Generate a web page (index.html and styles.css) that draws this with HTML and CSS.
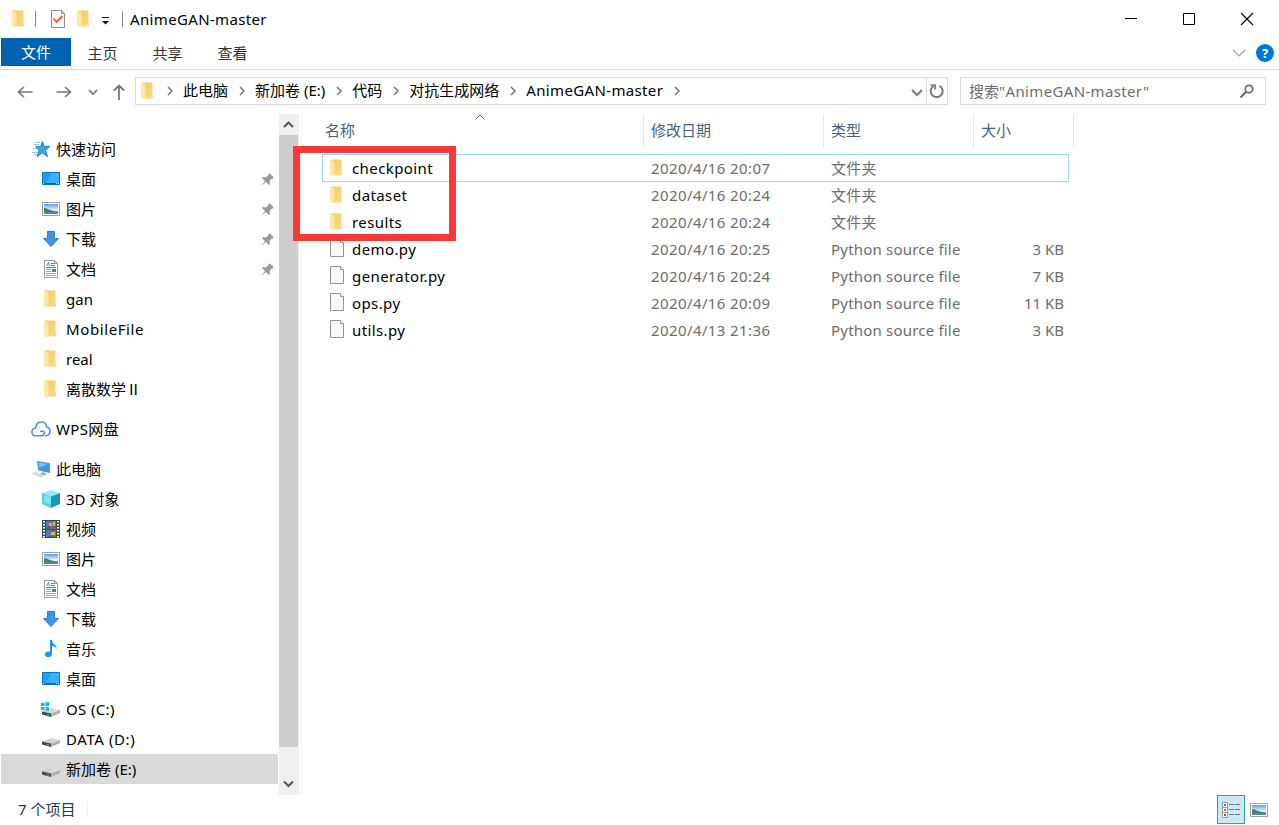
FILE: index.html
```
<!DOCTYPE html>
<html lang="zh-CN">
<head>
	<meta charset="UTF-8">
	<title>AnimeGAN-master</title>
	<link rel="stylesheet" href="styles.css">
</head>
<body>
	<!-- 图标 -->
	<svg class="defs" width="0" height="0">
		<defs>
			<linearGradient id="gold" x1="0" x2="1" y1="0" y2="1"><stop offset="0" stop-color="#f0cb68"/><stop offset="1" stop-color="#fbdc86"/></linearGradient>
			<linearGradient id="sky" x1="0" x2="0" y1="0" y2="1"><stop offset="0" stop-color="#5a9cf0"/><stop offset=".6" stop-color="#e8f4fb"/><stop offset="1" stop-color="#9cc4dc"/></linearGradient>
			<linearGradient id="disk" x1="0" x2="1" y1="0" y2="0"><stop offset="0" stop-color="#c4c4c6"/><stop offset="1" stop-color="#e4e4e6"/></linearGradient>
		</defs>
		<symbol id="folder" viewBox="0 0 20 20">
			<path d="M4 1.500h10.500V13l.5 1v3.500H4z" fill="url(#gold)"/>
			<path d="M3 1.500h1L7.500 4v12.500L6 18.500l-3-2z" fill="#ffe8a4"/>
		</symbol>
		<symbol id="desktop" viewBox="0 0 20 20">
			<path d="M1.500 3.500h17v12h-17z" fill="#18a0fb" stroke="#0873b8"/>
			<path d="M11 4h7v10H5z" fill="#3bb0ff"/>
			<path d="M2 14.500h16" stroke="#0569a8"/>
			<path d="M2 14.500h1M15 14.500h1M17 14.500h1" stroke="#fff"/>
		</symbol>
		<symbol id="picture" viewBox="0 0 20 20">
			<path d="M1.500 3.500h17v13h-17z" fill="#fff" stroke="#a0a0a0"/>
			<path d="M3 5h14v10H3z" fill="url(#sky)"/>
			<path d="M3 9c3 0 5 2 9 3l5 .5V14H3z" fill="#497f68"/>
			<path d="M3 13.500c5-1 9 .5 14-1V15H3z" fill="#5387ab"/>
		</symbol>
		<symbol id="download" viewBox="0 0 20 20">
			<path d="M6.500 2.500h7v7h4L10 17.500l-7.500-8h4z" fill="#3c96e6" stroke="#2a7fcd"/>
		</symbol>
		<symbol id="doc" viewBox="0 0 20 20">
			<path d="M3.500 1.500h10l3 3v14h-13z" fill="#fff" stroke="#999"/>
			<path d="M13.500 1.500v3h3" fill="none" stroke="#999"/>
			<path d="M5.500 7l2-3.500L8.500 7M10 4.500h3M10 6.500h4M5 8.500h10" fill="none" stroke="#2b8fd0"/>
			<path d="M5 10.500h5M5 12.500h5M5 14.500h10M5 16.500h10" stroke="#a3a3a3"/>
			<path d="M11 10h4v3h-4z" fill="#4285b5"/>
		</symbol>
		<symbol id="star" viewBox="0 0 20 20">
			<path d="M11.500 2.500l1.600 5 6-.2-4.600 4 2 6.200-5.300-3.700-5.200 3.700 2-6.300-3.300-3.500 5 .1z" fill="#35a7ee" stroke="#2185c9"/>
			<path d="M4 3.500h5M2.500 5.500h5M2 9.500h4M1 13.500h5M3.500 15.500h2" stroke="#8cc9ed"/>
		</symbol>
		<symbol id="cloud" viewBox="0 0 20 20">
			<path d="M11.500 16.800H5A3.900 3.900 0 0 1 4.600 9C5.200 1.200 15 1.400 15.600 7.800A4.600 4.600 0 0 1 15 16.800M9.800 12.500C12 11 14.500 13.500 13 15.300 12.500 16.300 11.900 16.800 11 16.800" fill="none" stroke="#4d8df0" stroke-width="1.600" stroke-linecap="round"/>
		</symbol>
		<symbol id="pc" viewBox="0 0 20 20">
			<path d="M6.500 2.500l12 2v9L7.500 11z" fill="#329fdf" stroke="#6e8796" stroke-width=".8"/>
			<path d="M7.500 3.500l9 1.500-8 3.500z" fill="#79caf5"/>
			<path d="M11 13l3 .5 2 2-3 1-4-1.500z" fill="#a4afb7"/>
			<path d="M0 14.500l4-1.500 10 4-4 1.500z" fill="#d3d8dc"/>
		</symbol>
		<symbol id="cube" viewBox="0 0 20 20">
			<path d="M1 4l9-3 9 3-9 4z" fill="#a0e9f3"/>
			<path d="M1 4l9 3.500V19l-9-4z" fill="#4fd0e3"/>
			<path d="M19 4l-9 3.500V19l9-4z" fill="#1499b6"/>
			<path d="M3 6l7 2.500v7L3 13z" fill="#82e0ed"/>
		</symbol>
		<symbol id="video" viewBox="0 0 20 20">
			<path d="M1 1h18v18H1z" fill="#444"/>
			<path d="M5 2h10v8H5zM5 11h10v7H5z" fill="#477bd2"/>
			<path d="M3 2v17M17 2v17" stroke="#fff" stroke-width="2" stroke-dasharray="1.500 1.500"/>
			<path d="M8 4h3v3H8zM12 3h2v4h-2zM10 13h4v3h-4z" fill="#eab52c"/>
			<path d="M10 9h3v3h-3zM6 7h4v2H6z" fill="#c53826"/>
			<path d="M5 9h4v1H5zM12 7h3v2h-3zM7 17h7v1H7z" fill="#397d3d"/>
		</symbol>
		<symbol id="music" viewBox="0 0 20 20">
			<path d="M9 1h2c0 4 5 4 4.500 9-.8-2-2-3-4.500-3v7.500c0 5-7 4.500-7 1 0-2.500 3-3.500 5-2.500z" fill="#0f99f2"/>
		</symbol>
		<symbol id="drive" viewBox="0 0 20 20">
			<path d="M1 12.500L10.500 9 19 11l-9 3.500z" fill="url(#disk)"/>
			<path d="M1 12.500l9 2V18l-9-2.500z" fill="#484848"/>
			<path d="M10 14.500l9-3.500v3l-9 4z" fill="#b0b0b2"/>
			<path d="M6 15.500l2 .6" stroke="#35d444" stroke-width="1.500"/>
		</symbol>
		<symbol id="osdrive" viewBox="0 0 20 20">
			<use href="#drive"/>
			<path d="M0 3h9v8.500H0z" fill="#fff"/>
			<path d="M0 4l3.500-.5V7H0zM4.500 3.300L8 3v4H4.500zM0 8h3.500v3.300L0 11zM4.500 8H8v4l-3.500-.5z" fill="#0bb9ef"/>
		</symbol>
		<symbol id="file" viewBox="0 0 20 20">
			<path d="M3.500 .5h10l3 3v14h-13z" fill="#f8f8f8" stroke="#949494"/>
			<path d="M13.500 .5v3h3" fill="#fff" stroke="#949494"/>
		</symbol>
		<symbol id="pin" viewBox="0 0 14 14">
			<path d="M8.500 1l1.500-.5L13.500 4l-.5 1.500-1.500.2L9.500 8l.5 3-1 1-3-3-5 4 4-5-3-3 1-1 3 .5 2.400-2.400z" fill="#929ca5"/>
		</symbol>
		<symbol id="chev" viewBox="0 0 10 10">
			<path d="M3 1l4 4-4 4" fill="none" stroke="#777" stroke-width="1.500"/>
		</symbol>
	</svg>

	<div class="titlebar">
		<svg class="icon"><use href="#folder"/></svg>
		<i class="bar"></i>
		<svg class="check" width="16" height="20" viewBox="0 0 16 20">
			<path d="M1.500 1.500h10l3 3v14h-13z" fill="#fafafa" stroke="#8b8b8b"/>
			<path d="M11.500 1.500v3h3" fill="none" stroke="#8b8b8b"/>
			<path d="M3.500 9.500l3 3.500L12.500 7" fill="none" stroke="#f0591e" stroke-width="1.800"/>
		</svg>
		<svg class="icon"><use href="#folder"/></svg>
		<svg class="quick" width="8" height="8" viewBox="0 0 8 8"><path d="M0 .5h7" stroke="#111"/><path d="M0 4h7L3.500 7.500z" fill="#111"/></svg>
		<i class="bar last"></i>
		<span class="en">AnimeGAN-master</span>
		<div class="winbtns">
			<svg width="14" height="14" viewBox="0 0 14 14"><path d="M1 6.500h12" stroke="#000"/></svg>
			<svg width="14" height="14" viewBox="0 0 14 14"><path d="M1.500 1.500h11v11h-11z" fill="none" stroke="#000"/></svg>
			<svg width="14" height="14" viewBox="0 0 14 14"><path d="M1 1l12 12M13 1L1 13" stroke="#000" stroke-width="1.100"/></svg>
		</div>
	</div>

	<div class="tabs">
		<div class="tab active">文件</div>
		<div class="tab">主页</div>
		<div class="tab">共享</div>
		<div class="tab">查看</div>
		<svg class="expand" width="14" height="8" viewBox="0 0 14 8"><path d="M1 1l6 6 6-6" fill="none" stroke="#a0a0a0" stroke-width="1.200"/></svg>
		<div class="help">?</div>
	</div>

	<div class="navbar">
		<div class="arrows">
			<svg width="16" height="14" viewBox="0 0 16 14"><path d="M15.500 7H1.500M7 2L1.500 7 7 12" fill="none" stroke="#777" stroke-width="1.600"/></svg>
			<svg width="16" height="14" viewBox="0 0 16 14"><path d="M.5 7h14M9 2l5.500 5L9 12" fill="none" stroke="#777" stroke-width="1.600"/></svg>
			<svg width="10" height="6" viewBox="0 0 10 6"><path d="M1 1l4 4 4-4" fill="none" stroke="#777" stroke-width="1.700"/></svg>
			<svg width="12" height="16" viewBox="0 0 12 16"><path d="M6 16V1.500M1 6.500l5-5 5 5" fill="none" stroke="#777" stroke-width="1.800"/></svg>
		</div>
		<div class="address">
			<svg class="icon"><use href="#folder"/></svg>
			<svg class="chev"><use href="#chev"/></svg>
			<span>此电脑</span>
			<svg class="chev"><use href="#chev"/></svg>
			<span>新加卷 (E:)</span>
			<svg class="chev"><use href="#chev"/></svg>
			<span>代码</span>
			<svg class="chev"><use href="#chev"/></svg>
			<span>对抗生成网络</span>
			<svg class="chev"><use href="#chev"/></svg>
			<span class="en">AnimeGAN-master</span>
			<svg class="chev"><use href="#chev"/></svg>
			<svg class="drop" width="12" height="8" viewBox="0 0 12 8"><path d="M1 1l5 5 5-5" fill="none" stroke="#777" stroke-width="2"/></svg>
			<div class="refresh">
				<svg width="16" height="16" viewBox="0 0 16 16"><path d="M10.500 2.800A6 6 0 1 1 4.500 3" fill="none" stroke="#777" stroke-width="2"/><path d="M1.500 2H6v4.500" fill="none" stroke="#777" stroke-width="1.700"/></svg>
			</div>
		</div>
		<div class="search">
			<span>搜索<b class="en">"AnimeGAN-master"</b></span>
			<svg width="14" height="14" viewBox="0 0 14 14"><circle cx="9" cy="5" r="3.700" fill="none" stroke="#666" stroke-width="1.700"/><path d="M6 8l-5.500 5.500" stroke="#666" stroke-width="2"/></svg>
		</div>
	</div>

	<div class="main">
		<div class="side">
			<div class="group">
				<div class="item root"><svg class="icon"><use href="#star"/></svg>快速访问</div>
				<div class="item"><svg class="icon"><use href="#desktop"/></svg>桌面<svg class="pin"><use href="#pin"/></svg></div>
				<div class="item"><svg class="icon"><use href="#picture"/></svg>图片<svg class="pin"><use href="#pin"/></svg></div>
				<div class="item"><svg class="icon"><use href="#download"/></svg>下载<svg class="pin"><use href="#pin"/></svg></div>
				<div class="item"><svg class="icon"><use href="#doc"/></svg>文档<svg class="pin"><use href="#pin"/></svg></div>
				<div class="item"><svg class="icon"><use href="#folder"/></svg>gan</div>
				<div class="item"><svg class="icon"><use href="#folder"/></svg><span class="wide">MobileFile</span></div>
				<div class="item"><svg class="icon"><use href="#folder"/></svg>real</div>
				<div class="item"><svg class="icon"><use href="#folder"/></svg><span class="cn">离散数学Ⅱ</span></div>
			</div>
			<div class="group">
				<div class="item root"><svg class="icon"><use href="#cloud"/></svg><span class="en">WPS网盘</span></div>
			</div>
			<div class="group">
				<div class="item root"><svg class="icon"><use href="#pc"/></svg>此电脑</div>
				<div class="item"><svg class="icon"><use href="#cube"/></svg><span>3D 对象</span></div>
				<div class="item"><svg class="icon"><use href="#video"/></svg>视频</div>
				<div class="item"><svg class="icon"><use href="#picture"/></svg>图片</div>
				<div class="item"><svg class="icon"><use href="#doc"/></svg>文档</div>
				<div class="item"><svg class="icon"><use href="#download"/></svg>下载</div>
				<div class="item"><svg class="icon"><use href="#music"/></svg>音乐</div>
				<div class="item"><svg class="icon"><use href="#desktop"/></svg>桌面</div>
				<div class="item"><svg class="icon"><use href="#osdrive"/></svg><span class="en">OS (C:)</span></div>
				<div class="item"><svg class="icon"><use href="#drive"/></svg><span class="wide">DATA (D:)</span></div>
				<div class="item on"><svg class="icon"><use href="#drive"/></svg>新加卷 (E:)</div>
			</div>
		</div>
		<div class="scroll">
			<svg width="12" height="8" viewBox="0 0 12 8"><path d="M1 7l4.500-4.500L10 7" fill="none" stroke="#555" stroke-width="2"/></svg>
			<div class="thumb"></div>
			<svg width="12" height="8" viewBox="0 0 12 8"><path d="M1 1.500L5.500 6 10 1.500" fill="none" stroke="#555" stroke-width="2"/></svg>
		</div>
		<div class="list">
			<div class="head">
				<div class="col name">名称<svg class="sort" width="10" height="6" viewBox="0 0 10 6"><path d="M.5 5.500L5 1l4.500 4.500" fill="none" stroke="#666"/></svg></div>
				<div class="col date">修改日期</div>
				<div class="col type">类型</div>
				<div class="col size">大小</div>
			</div>
			<div class="rows">
				<div class="row focus"><svg class="icon"><use href="#folder"/></svg><div class="fname">checkpoint</div><div class="fdate">2020/4/16 20:07</div><div class="ftype">文件夹</div><div class="fsize"></div></div>
				<div class="row"><svg class="icon"><use href="#folder"/></svg><div class="fname">dataset</div><div class="fdate">2020/4/16 20:24</div><div class="ftype">文件夹</div><div class="fsize"></div></div>
				<div class="row"><svg class="icon"><use href="#folder"/></svg><div class="fname">results</div><div class="fdate">2020/4/16 20:24</div><div class="ftype">文件夹</div><div class="fsize"></div></div>
				<div class="row"><svg class="icon"><use href="#file"/></svg><div class="fname">demo.py</div><div class="fdate">2020/4/16 20:25</div><div class="ftype">Python source file</div><div class="fsize">3 KB</div></div>
				<div class="row"><svg class="icon"><use href="#file"/></svg><div class="fname">generator.py</div><div class="fdate">2020/4/16 20:24</div><div class="ftype">Python source file</div><div class="fsize">7 KB</div></div>
				<div class="row"><svg class="icon"><use href="#file"/></svg><div class="fname">ops.py</div><div class="fdate">2020/4/16 20:09</div><div class="ftype">Python source file</div><div class="fsize">11 KB</div></div>
				<div class="row"><svg class="icon"><use href="#file"/></svg><div class="fname">utils.py</div><div class="fdate">2020/4/13 21:36</div><div class="ftype">Python source file</div><div class="fsize">3 KB</div></div>
			</div>
			<!-- 红框标注 -->
			<div class="mark"></div>
		</div>
	</div>

	<div class="status">
		<span>7 个项目</span>
		<div class="views">
			<div class="view active">
				<svg width="20" height="18" viewBox="0 0 20 18">
					<path d="M1.500 1.500h5v5h-5zM1.500 6.500h5v5h-5zM1.500 11.500h5v5h-5z" fill="#fff" stroke="#999"/>
					<path d="M3 3h2v2H3z" fill="#3c7ec0"/><path d="M3 8h2v2H3z" fill="#6d9235"/><path d="M3 13h2v2H3z" fill="#c9302c"/>
					<path d="M8 3.500h5M14 3.500h5M8 8.500h5M14 8.500h5M8 13.500h5M14 13.500h5" stroke="#777"/>
				</svg>
			</div>
			<div class="view"><svg class="icon"><use href="#picture"/></svg></div>
		</div>
	</div>
</body>
</html>
```
FILE: styles.css
```
*{
	padding: 0;
	margin: 0;
	box-sizing: border-box;
}
body{
	width: 1279px;
	height: 825px;
	overflow: hidden;
	background-color: #fff;
	color: #000;
	font-family: "Noto Sans", "Noto Sans CJK SC", sans-serif;
	font-size: 15px;
	line-height: 20px;
	cursor: default;
	display: flex;
	flex-direction: column;
}
b{
	font-weight: normal;
}
svg{
	display: block;
	flex: none;
}
.defs{
	position: absolute;
}
.icon{
	width: 20px;
	height: 20px;
}
.en{
	letter-spacing: 0.35px;
}
.wide{
	letter-spacing: 0.6px;
}
.cn{
	font-family: "Noto Sans CJK SC", sans-serif;
}

/* 标题栏 */
.titlebar{
	height: 38px;
	display: flex;
	align-items: center;
	padding-left: 9px;
}
.bar{
	width: 1px;
	height: 16px;
	background-color: #888;
	margin: 0 14px 0 6px;
}
.check{
	margin-right: 8px;
}
.quick{
	margin: 4px 0 0 8px;
}
.bar.last{
	margin: 0 7px 0 12px;
}
.winbtns{
	margin-left: auto;
	display: flex;
	gap: 44px;
	padding-right: 25px;
}

/* 选项卡 */
.tabs{
	height: 32px;
	display: flex;
	border-bottom: 1px #dadbdc solid;
	padding-left: 1px;
}
.tab{
	width: 65px;
	height: 28px;
	line-height: 31px;
	padding-right: 2px;
	text-align: center;
	color: #333;
}
.tab.active{
	width: 70px;
	line-height: 29px;
	padding: 0;
	background-color: #0063b1;
	color: #fff;
}
.expand{
	margin: 11px 10px 0 auto;
}
.help{
	width: 18px;
	height: 18px;
	margin: 6px 5px 0 0;
	border-radius: 50%;
	background-color: #0078d7;
	color: #fff;
	font-size: 13px;
	font-weight: bold;
	line-height: 18px;
	text-align: center;
}

/* 地址栏 */
.navbar{
	height: 44px;
	display: flex;
	padding: 7px 13px 9px 0;
}
.arrows{
	width: 135px;
	display: flex;
	align-items: center;
	padding: 2px 0 0 17px;
}
.arrows svg:nth-child(2){
	margin-left: 23px;
}
.arrows svg:nth-child(3){
	margin-left: 16px;
}
.arrows svg:nth-child(4){
	margin-left: 15px;
}
.address{
	width: 813px;
	height: 28px;
	border: 1px #d9d9d9 solid;
	display: flex;
	align-items: center;
	padding-left: 2px;
	white-space: nowrap;
}
.address>.icon{
	margin-right: 5px;
}
.address span{
	margin-top: -2px;
}
.chev{
	width: 10px;
	height: 10px;
	margin: 0 8px 0 9px;
}
.address>.icon+.chev{
	margin-left: 2px;
}
.drop{
	margin: 3px 3px 0 auto;
}
.refresh{
	width: 21px;
	height: 26px;
	border-left: 1px #d9d9d9 solid;
	display: flex;
	align-items: center;
	justify-content: center;
}
.search{
	width: 306px;
	height: 28px;
	margin-left: 12px;
	border: 1px #d9d9d9 solid;
	color: #6d6d6d;
	display: flex;
	align-items: center;
	justify-content: space-between;
	padding: 0 11px 0 8px;
}

/* 主体 */
.main{
	height: 681px;
	display: flex;
}
.side{
	width: 279px;
	padding: 20px 1px 0 1px;
}
.group{
	margin-bottom: 10px;
}
.item{
	height: 30px;
	display: flex;
	align-items: center;
	gap: 5px;
	padding-left: 40px;
	white-space: nowrap;
}
.item.root{
	padding-left: 30px;
}
.item.on{
	background-color: #d9d9d9;
}
.pin{
	width: 14px;
	height: 14px;
	margin: 1px 4px 0 auto;
}
.scroll{
	width: 20px;
	background-color: #f0f0f0;
	display: flex;
	flex-direction: column;
	align-items: center;
	padding: 6px 1px 6px 0;
}
.thumb{
	width: 19px;
	height: 612px;
	margin: 7px 0 33px 0;
	background-color: #cdcdcd;
}
.list{
	position: relative;
	width: 978px;
	margin-left: 2px;
	border-left: 1px #f5f5f5 solid;
}
.head{
	height: 33px;
	display: flex;
	padding-left: 16px;
	color: #4c607a;
}
.col{
	border-right: 1px #e5e5e5 solid;
	line-height: 33px;
	padding-left: 7px;
}
.col.name{
	width: 326px;
	position: relative;
}
.col.date{
	width: 180px;
}
.col.type{
	width: 150px;
}
.col.size{
	width: 100px;
}
.sort{
	position: absolute;
	left: 157px;
	top: 0;
}
.rows{
	padding: 7px 0 0 20px;
}
.row{
	width: 747px;
	height: 28px;
	margin-bottom: -1px;
	border: 1px transparent solid;
	display: flex;
	align-items: center;
	padding-left: 4px;
	color: #6d6d6d;
	white-space: nowrap;
}
.row.focus{
	border-color: #99d1ff;
}
.fname{
	width: 299px;
	margin-left: 5px;
	color: #000;
	letter-spacing: 0.4px;
}
.fdate{
	width: 180px;
	letter-spacing: 0.4px;
}
.ftype{
	width: 140px;
	letter-spacing: 0.2px;
}
.fsize{
	width: 93px;
	text-align: right;
}
.mark{
	position: absolute;
	left: -9px;
	top: 32px;
	width: 163px;
	height: 95px;
	border: 7px #fb3838 solid;
}

/* 状态栏 */
.status{
	height: 30px;
	display: flex;
	align-items: flex-start;
	justify-content: space-between;
	padding-left: 18px;
	color: #26384f;
}
.status span{
	margin-top: 7px;
	padding-right: 12px;
	border-right: 1px #f0f0f0 solid;
	line-height: 14px;
}
.views{
	display: flex;
	align-items: center;
	padding-right: 6px;
}
.view{
	width: 28px;
	height: 29px;
	display: flex;
	align-items: center;
	justify-content: center;
}
.view.active{
	background-color: #cce8f6;
	border: 1px #26a0da solid;
}
```
